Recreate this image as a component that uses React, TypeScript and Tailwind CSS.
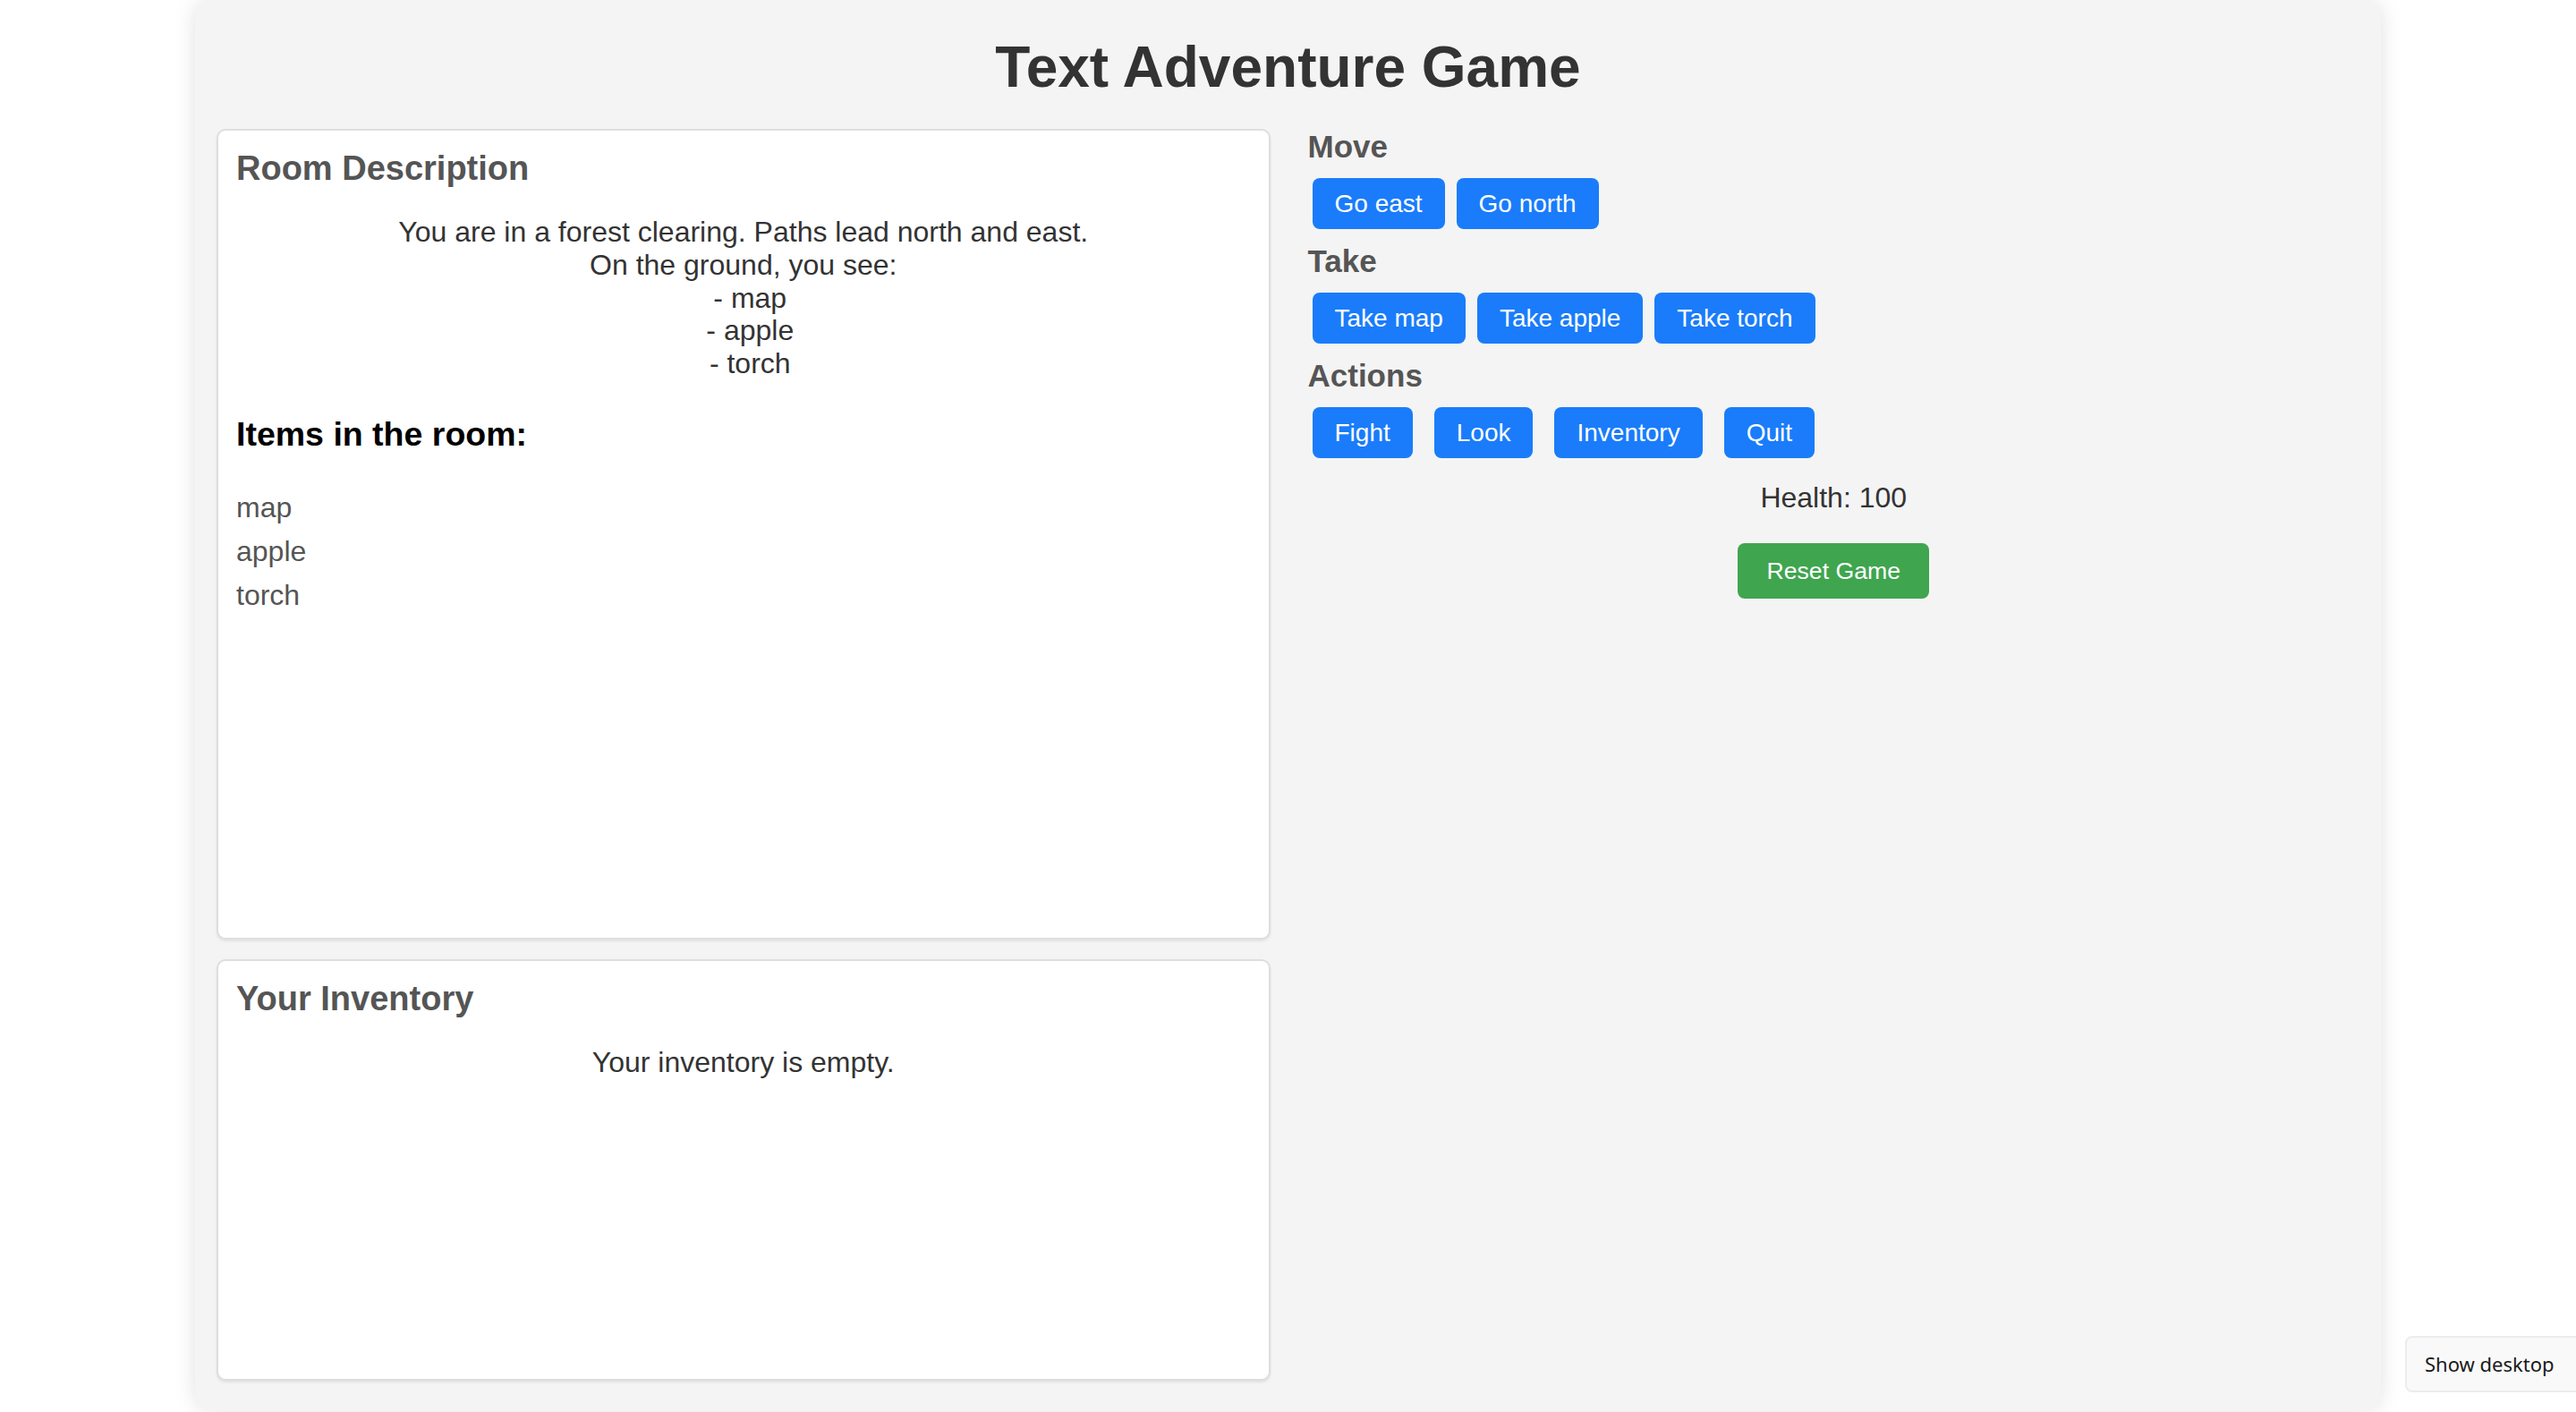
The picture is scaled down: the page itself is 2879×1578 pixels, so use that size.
import React from "react";

const Btn = ({ label }: { label: string }) => (
  <button className="h-[57px] px-[25px] rounded-[8px] bg-[#1a7cfa] text-white text-[28px] leading-[32px] font-['Liberation_Sans',Arial,sans-serif]">
    {label}
  </button>
);

export default function App() {
  return (
    <div className="relative h-[1578px] w-full overflow-hidden bg-white font-['Liberation_Sans',Arial,sans-serif]">
      <div className="mx-auto w-[2443px] h-[1577px] bg-[#f4f4f4] rounded-[20px] shadow-[0_0_24px_rgba(0,0,0,0.12)] px-[24px] pt-[38px]">
        <h1 className="text-center text-[64px] font-bold text-[#333] leading-[74px]">Text Adventure Game</h1>
        <div className="mt-[32px] flex">
          <div className="w-[1178px] flex flex-col gap-[22px]">
            <div className="h-[906px] bg-white border-2 border-[#dedede] rounded-[10px] shadow-[0_2px_3px_rgba(0,0,0,0.08)] p-[20px]">
              <h2 className="text-[38px] font-bold text-[#555] leading-[44px]">Room Description</h2>
              <div className="mt-[31px] text-center text-[32px] leading-[36.8px] text-[#333]">
                <div>You are in a forest clearing. Paths lead north and east.</div>
                <div>On the ground, you see:</div>
                <div className="pl-[15px]">- map</div>
                <div className="pl-[15px]">- apple</div>
                <div className="pl-[15px]">- torch</div>
              </div>
              <h3 className="mt-[39px] text-[37.5px] font-bold text-black leading-[43px]">Items in the room:</h3>
              <ul className="mt-[36px] text-[32px] text-[#555]">
                <li className="py-[6px] leading-[37px]">map</li>
                <li className="py-[6px] leading-[37px]">apple</li>
                <li className="py-[6px] leading-[37px]">torch</li>
              </ul>
            </div>
            <div className="h-[471px] bg-white border-2 border-[#dedede] rounded-[10px] shadow-[0_2px_3px_rgba(0,0,0,0.08)] px-[20px] pt-[20px]">
              <h2 className="text-[38px] font-bold text-[#555] leading-[44px]">Your Inventory</h2>
              <p className="mt-[31px] text-center text-[32px] leading-[37px] text-[#333]">Your inventory is empty.</p>
            </div>
          </div>
          <div className="ml-[42px] w-[1176px] flex flex-col">
            <h3 className="text-[35px] font-bold text-[#555] leading-[39px]">Move</h3>
            <div className="mt-[16px] ml-[5px] flex gap-[13px]">
              <Btn label="Go east" />
              <Btn label="Go north" />
            </div>
            <h3 className="mt-[16px] text-[35px] font-bold text-[#555] leading-[39px]">Take</h3>
            <div className="mt-[16px] ml-[5px] flex gap-[13px]">
              <Btn label="Take map" />
              <Btn label="Take apple" />
              <Btn label="Take torch" />
            </div>
            <h3 className="mt-[16px] text-[35px] font-bold text-[#555] leading-[39px]">Actions</h3>
            <div className="mt-[16px] ml-[5px] flex gap-[24px]">
              <Btn label="Fight" />
              <Btn label="Look" />
              <Btn label="Inventory" />
              <Btn label="Quit" />
            </div>
            <p className="mt-[26px] text-center text-[32px] leading-[37px] text-[#333]">Health: 100</p>
            <button className="mt-[32px] self-center h-[62px] px-[32px] rounded-[8px] bg-[#3fa54f] text-white text-[26.67px] leading-[30px]">
              Reset Game
            </button>
          </div>
        </div>
      </div>
      <div className="absolute left-[2688px] bottom-[22px] w-[200px] h-[63px] flex items-center pl-[20px] bg-[#f9f9f9] border-2 border-[#ececec] rounded-[8px] text-[22px] text-[#1a1a1a] font-['Noto_Sans',sans-serif]">
        Show desktop
      </div>
    </div>
  );
}
